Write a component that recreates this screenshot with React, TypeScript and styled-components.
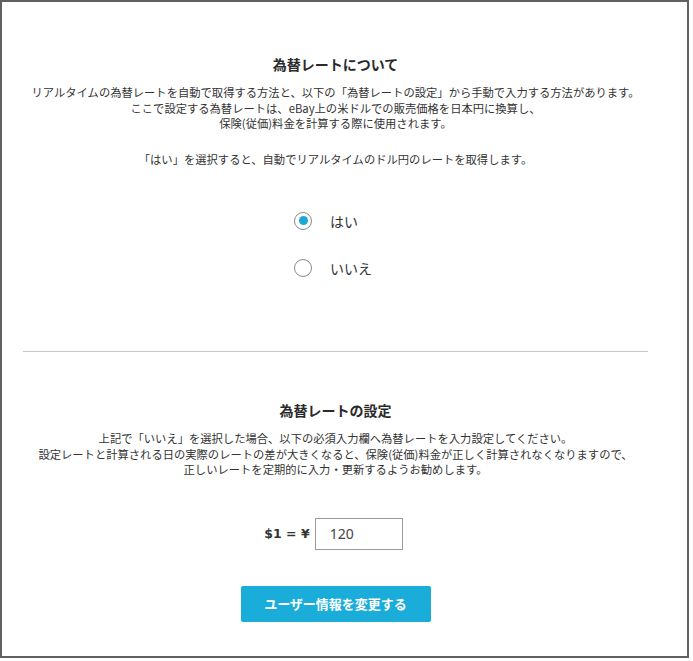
import React, { useState } from 'react';
import styled, { createGlobalStyle } from 'styled-components';

const GlobalStyle = createGlobalStyle`
    body {
        margin: 0;
        background: #fff;
        font-family: "Noto Sans CJK JP", "Noto Sans", sans-serif;
        color: #333;
    }
`

const Frame = styled.div`
    width: 689px;
    height: 658px;
    box-sizing: border-box;
    border: 2px solid #616161;
    padding: 0 39px 0 21px;
    display: flex;
    flex-direction: column;
    align-items: center;
`

const Section = styled.section<{ $top: number }>`
    width: 100%;
    padding-top: ${(p) => p.$top}px;
    display: flex;
    flex-direction: column;
    align-items: center;
    text-align: center;
`

const Title = styled.h2`
    margin: 0 0 11px;
    font-size: 14px;
    font-weight: 700;
    line-height: 20px;
    color: #2a2a2a;
`

const Text = styled.p<{ $gap?: number }>`
    margin: 0 0 ${(p) => p.$gap ?? 0}px;
    font-size: 11.3px;
    line-height: 15.5px;
    color: #333;
    white-space: nowrap;
`

const RadioGroup = styled.div`
    margin-top: 44px;
    padding-right: 5px;
    display: flex;
    flex-direction: column;
    gap: 28px;
`

const RadioRow = styled.label`
    display: flex;
    align-items: center;
    gap: 18px;
    cursor: pointer;
    font-size: 14px;
    color: #333;
    height: 19px;
`

const Circle = styled.span<{ $on: boolean }>`
    width: 18px;
    height: 18px;
    box-sizing: border-box;
    border-radius: 50%;
    border: 1.5px solid #8a8a8a;
    display: flex;
    align-items: center;
    justify-content: center;

    &::after {
        content: '';
        width: 9px;
        height: 9px;
        border-radius: 50%;
        background: ${(p) => (p.$on ? '#1aa9d6' : 'transparent')};
    }
`

const Divider = styled.hr`
    width: 100%;
    margin: 74px 0 0;
    border: none;
    border-top: 1.5px solid #c9c9c9;
`

const RateRow = styled.div`
    margin-top: 40px;
    padding-right: 4px;
    display: flex;
    align-items: center;
    gap: 5px;
`

const RateLabel = styled.span`
    font-family: "DejaVu Sans", sans-serif;
    font-size: 12.5px;
    font-weight: 700;
    color: #333;
`

const RateInput = styled.input`
    width: 88px;
    height: 32px;
    box-sizing: border-box;
    border: 1px solid #9a9a9a;
    padding: 0 14px;
    font-family: "Noto Sans", sans-serif;
    font-size: 14px;
    color: #444;
    outline: none;
`

const SubmitButton = styled.button`
    margin-top: 36px;
    width: 190px;
    height: 36px;
    border: none;
    border-radius: 2px;
    background: #1badd9;
    color: #fff;
    font-family: "Noto Sans CJK JP", sans-serif;
    font-size: 13px;
    font-weight: 700;
    cursor: pointer;
`

const App: React.FC = () => {
    const [auto, setAuto] = useState(true);
    const [rate, setRate] = useState('120');

    return (
        <>
            <GlobalStyle />
            <Frame>
                <Section $top={52}>
                    <Title>為替レートについて</Title>
                    <Text>リアルタイムの為替レートを自動で取得する方法と、以下の「為替レートの設定」から手動で入力する方法があります。</Text>
                    <Text>ここで設定する為替レートは、eBay上の米ドルでの販売価格を日本円に換算し、</Text>
                    <Text $gap={20}>保険(従価)料金を計算する際に使用されます。</Text>
                    <Text>「はい」を選択すると、自動でリアルタイムのドル円のレートを取得します。</Text>
                    <RadioGroup>
                        <RadioRow onClick={() => setAuto(true)}>
                            <Circle $on={auto} />
                            はい
                        </RadioRow>
                        <RadioRow onClick={() => setAuto(false)}>
                            <Circle $on={!auto} />
                            いいえ
                        </RadioRow>
                    </RadioGroup>
                </Section>
                <Divider />
                <Section $top={48}>
                    <Title>為替レートの設定</Title>
                    <Text>上記で「いいえ」を選択した場合、以下の必須入力欄へ為替レートを入力設定してください。</Text>
                    <Text>設定レートと計算される日の実際のレートの差が大きくなると、保険(従価)料金が正しく計算されなくなりますので、</Text>
                    <Text>正しいレートを定期的に入力・更新するようお勧めします。</Text>
                    <RateRow>
                        <RateLabel>$1 = ¥</RateLabel>
                        <RateInput value={rate} onChange={(e) => setRate(e.target.value)} />
                    </RateRow>
                    <SubmitButton>ユーザー情報を変更する</SubmitButton>
                </Section>
            </Frame>
        </>
    );
};

export default App;
